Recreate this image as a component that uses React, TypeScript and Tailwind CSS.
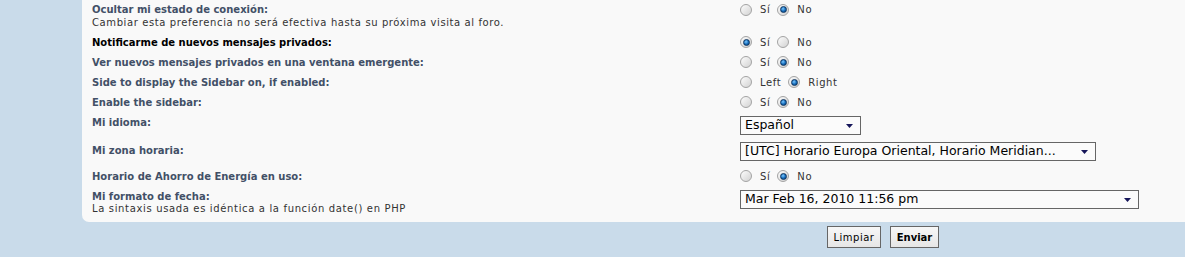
import React from "react";

interface Option {
	label: string;
	checked: boolean;
}

const Radio = ({ checked }: { checked: boolean }) => (
	<span className="flex h-[12px] w-[12px] shrink-0 items-center justify-center rounded-full border border-[#a3a3a3] bg-linear-to-br from-[#fdfdfd] to-[#d2d2d2]">
		{checked && (
			<span className="h-[7px] w-[7px] rounded-full border border-[#0d3561] bg-[radial-gradient(circle_at_40%_35%,#7cc8ff,#1269b8_55%,#0b3a6d)]" />
		)}
	</span>
);

const RadioGroup = ({ options }: { options: Option[] }) => (
	<div className="flex items-center text-[10px] leading-[13px] tracking-[0.6px] text-[#333]">
		{options.map((o) => (
			<label key={o.label} className="mr-[7px] flex items-center">
				<Radio checked={o.checked} />
				<span className="ml-[8px]">{o.label}</span>
			</label>
		))}
	</div>
);

const yesNo = (yes: boolean): Option[] => [
	{ label: "Sí", checked: yes },
	{ label: "No", checked: !yes },
];

const Select = ({ value, width }: { value: string; width: string }) => (
	<div
		className={`flex h-[19px] items-center justify-between border border-[#666] bg-[#fbfbfb] pl-[4px] pr-[7px] text-[12.5px] text-black ${width}`}
	>
		<span className="whitespace-nowrap">{value}</span>
		<svg width="7" height="4" viewBox="0 0 7 4">
			<path d="M0 0H7L3.5 4Z" fill="#16165a" />
		</svg>
	</div>
);

const Label = ({ children, dark }: { children: React.ReactNode; dark?: boolean }) => (
	<span className={`font-bold ${dark ? "text-black" : "text-[#425067]"}`}>{children}</span>
);

export default function App() {
	return (
		<div className="h-[275px] w-[1185px] overflow-hidden bg-white font-['DejaVu_Sans',sans-serif]">
			<div className="bg-[#c9dbea] pb-[9px]">
				<div className="ml-[82px] rounded-bl-[7px] bg-[#f9f9f9] pl-[10px] text-[10px]">
					{/* Ocultar estado */}
					<div className="flex h-[32px] pt-[3px]">
						<div className="w-[648px] shrink-0 leading-[13px]">
							<Label>Ocultar mi estado de conexión:</Label>
							<div className="tracking-[0.6px] text-[#333]">
								Cambiar esta preferencia no será efectiva hasta su próxima visita al foro.
							</div>
						</div>
						<div className="flex h-[13px] items-center">
							<RadioGroup options={yesNo(false)} />
						</div>
					</div>

					<div className="flex h-[20px] items-center">
						<div className="w-[648px] shrink-0">
							<Label dark>Notificarme de nuevos mensajes privados:</Label>
						</div>
						<RadioGroup options={yesNo(true)} />
					</div>

					<div className="flex h-[20px] items-center">
						<div className="w-[648px] shrink-0">
							<Label>Ver nuevos mensajes privados en una ventana emergente:</Label>
						</div>
						<RadioGroup options={yesNo(false)} />
					</div>

					<div className="flex h-[20px] items-center">
						<div className="w-[648px] shrink-0">
							<Label>Side to display the Sidebar on, if enabled:</Label>
						</div>
						<RadioGroup
							options={[
								{ label: "Left", checked: false },
								{ label: "Right", checked: true },
							]}
						/>
					</div>

					<div className="flex h-[20px] items-center">
						<div className="w-[648px] shrink-0">
							<Label>Enable the sidebar:</Label>
						</div>
						<RadioGroup options={yesNo(false)} />
					</div>

					{/* Idioma */}
					<div className="flex h-[26px]">
						<div className="w-[648px] shrink-0 pt-[4px] leading-[13px]">
							<Label>Mi idioma:</Label>
						</div>
						<div className="mt-[4px]">
							<Select value="Español" width="w-[121px]" />
						</div>
					</div>

					<div className="flex h-[27px]">
						<div className="w-[648px] shrink-0 pt-[6px] leading-[13px]">
							<Label>Mi zona horaria:</Label>
						</div>
						<div className="mt-[4px]">
							<Select
								value="[UTC] Horario Europa Oriental, Horario Meridian..."
								width="w-[356px]"
							/>
						</div>
					</div>

					<div className="flex h-[22px] items-center">
						<div className="w-[648px] shrink-0">
							<Label>Horario de Ahorro de Energía en uso:</Label>
						</div>
						<RadioGroup options={yesNo(false)} />
					</div>

					{/* Formato de fecha */}
					<div className="flex h-[35px]">
						<div className="w-[648px] shrink-0 pt-[4px] leading-[12px]">
							<Label>Mi formato de fecha:</Label>
							<div className="tracking-[0.65px] text-[#333]">
								La sintaxis usada es idéntica a la función date() en PHP
							</div>
						</div>
						<div className="mt-[3px]">
							<Select value="Mar Feb 16, 2010 11:56 pm" width="w-[399px]" />
						</div>
					</div>
				</div>

				<div className="flex gap-[9px] pl-[827px] pt-[4px] text-[10px]">
					<button className="h-[22px] w-[54px] border border-[#666] bg-linear-to-b from-[#f7f7f7] to-[#e6e6e6] tracking-[0.5px] text-black">
						Limpiar
					</button>
					<button className="h-[22px] w-[49px] border border-[#666] bg-linear-to-b from-[#f7f7f7] to-[#e6e6e6] font-bold text-black">
						Enviar
					</button>
				</div>
			</div>
		</div>
	);
}
